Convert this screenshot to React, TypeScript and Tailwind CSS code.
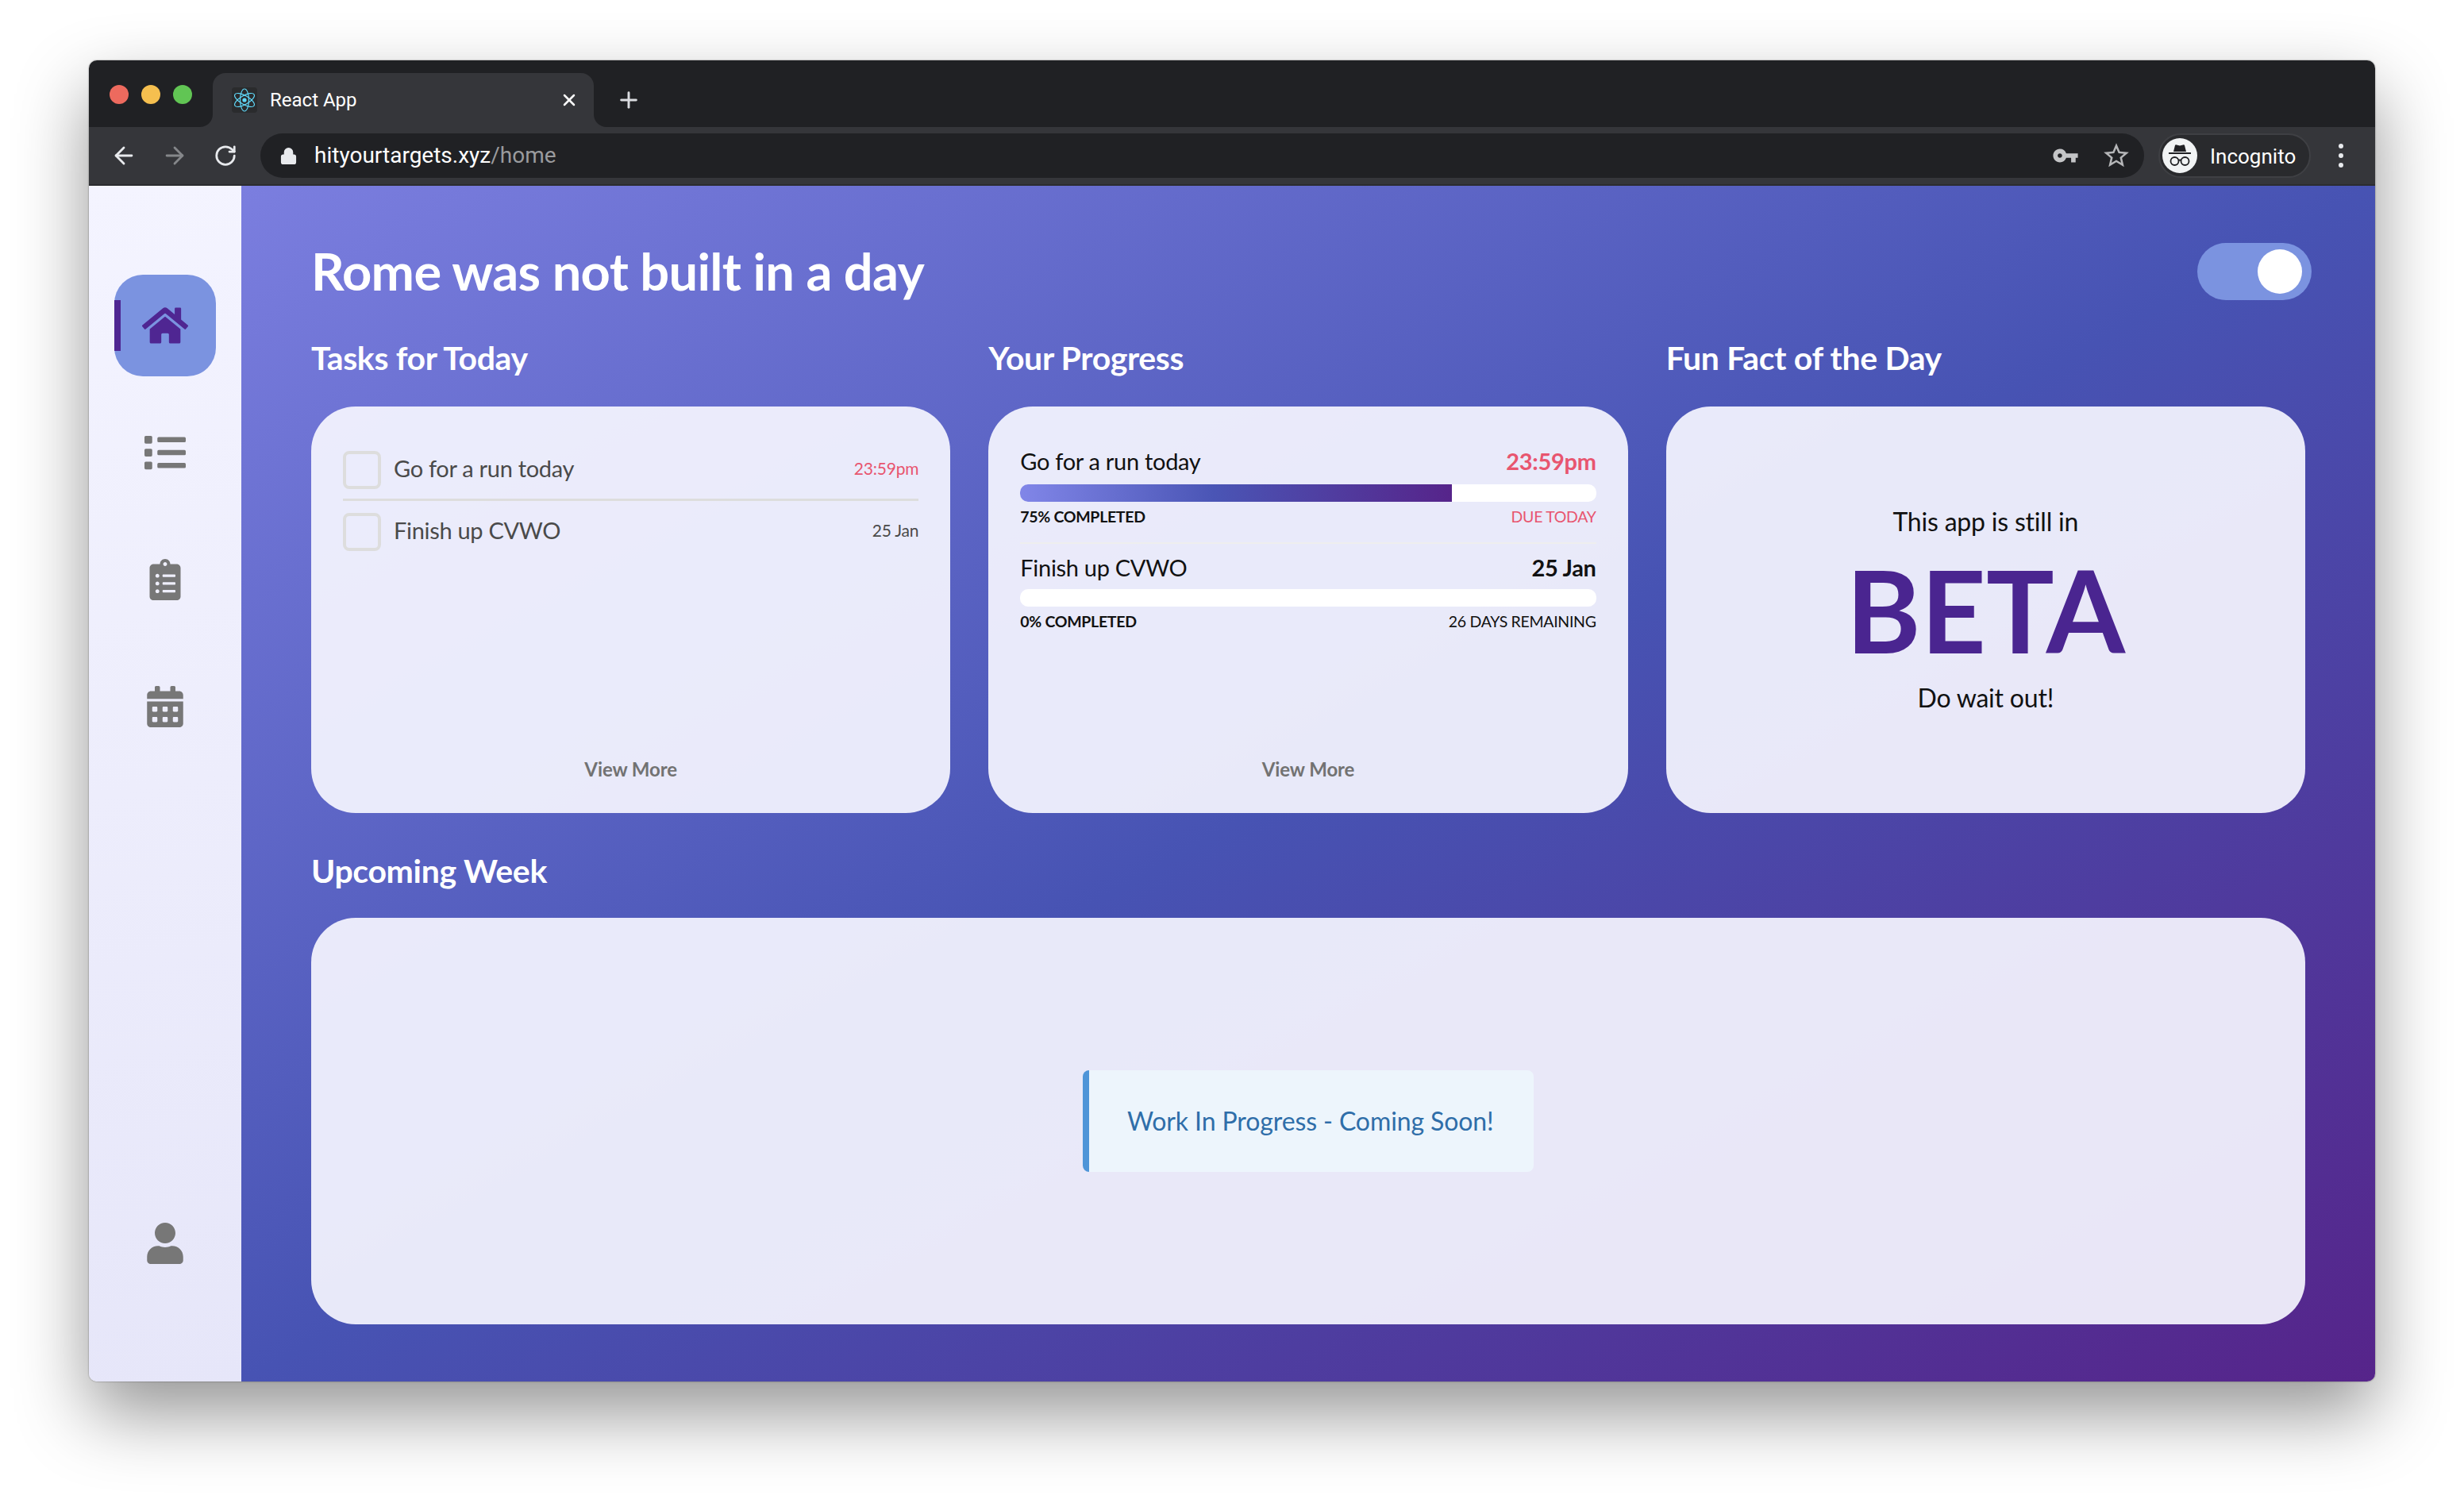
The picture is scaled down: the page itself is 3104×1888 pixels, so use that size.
import React from 'react';
import { ArrowLeft, ArrowRight, RotateCw, X, Plus, Lock } from 'lucide-react';
import { FaHome, FaList, FaClipboardList, FaCalendarAlt, FaUser } from 'react-icons/fa';
import { MdVpnKey, MdStarBorder } from 'react-icons/md';

const ReactLogo = () => (
  <svg viewBox="0 0 32 32" className="h-8 w-8 rounded bg-[#2a2b2d]">
    <g fill="none" stroke="#61dafb" strokeWidth="1.2">
      <ellipse cx="16" cy="16" rx="14" ry="5.5" transform="rotate(90 16 16)" />
      <ellipse cx="16" cy="16" rx="14" ry="5.5" transform="rotate(30 16 16)" />
      <ellipse cx="16" cy="16" rx="14" ry="5.5" transform="rotate(150 16 16)" />
    </g>
    <circle cx="16" cy="16" r="2.6" fill="#61dafb" />
  </svg>
);

const IncognitoIcon = () => (
  <svg viewBox="0 0 44 44" className="h-11 w-11 shrink-0">
    <circle cx="22" cy="22" r="22" fill="#f1f3f4" />
    <path d="M14 17 L16 9 Q16.500 8 18 8.500 L22 9.500 L26 8.500 Q27.500 8 28 9 L30 17 Z" fill="#202124" />
    <rect x="8" y="18" width="28" height="2" fill="#202124" />
    <g fill="none" stroke="#202124" strokeWidth="1.800">
      <circle cx="15.500" cy="29" r="5" />
      <circle cx="28.500" cy="29" r="5" />
      <path d="M20.500 28 Q22 27 23.500 28" />
    </g>
  </svg>
);

const TabFlare = ({ side }: { side: 'left' | 'right' }) => (
  <div className={`absolute bottom-0 h-4 w-4 bg-[#35363a] ${side === 'left' ? '-left-4' : '-right-4'}`}>
    <div className={`h-4 w-4 bg-[#202124] ${side === 'left' ? 'rounded-br-2xl' : 'rounded-bl-2xl'}`} />
  </div>
);

const BrowserChrome = () => (
  <div className="font-['Roboto',sans-serif]">
    <div className="flex h-[84px] bg-[#202124]">
      <div className="flex w-[156px] items-start gap-4 pl-[26px] pt-[31px]">
        <span className="h-6 w-6 rounded-full bg-[#ed6a5e]" />
        <span className="h-6 w-6 rounded-full bg-[#f5bf4f]" />
        <span className="h-6 w-6 rounded-full bg-[#61c554]" />
      </div>
      <div className="relative mt-4 flex h-[68px] w-[480px] items-center rounded-t-2xl bg-[#35363a] pl-6 pr-[19px]">
        <TabFlare side="left" />
        <ReactLogo />
        <span className="ml-[16px] text-[24px] text-white">React App</span>
        <X size={24} className="ml-auto text-white" strokeWidth={2.5} />
        <TabFlare side="right" />
      </div>
      <Plus size={32} className="ml-7 mt-[34px] text-[#dadce0]" strokeWidth={2.2} />
    </div>
    <div className="flex h-[74px] items-start border-b-2 border-[#2b2c2f] bg-[#35363a] pt-2">
      <div className="flex w-[216px] items-center pl-[27px] pt-[11px] text-white">
        <ArrowLeft size={34} strokeWidth={2} className="text-[#e8eaed]" />
        <ArrowRight size={34} strokeWidth={2} className="ml-[30px] text-[#85878a]" />
        <RotateCw size={30} strokeWidth={2.2} className="ml-[32px] text-[#e8eaed]" />
      </div>
      <div className="flex h-14 w-[2373px] items-center rounded-full bg-[#202124] pl-[24px] pr-[16px]">
        <Lock size={23} fill="#e8eaed" className="text-[#e8eaed]" strokeWidth={2} />
        <span className="ml-[21px] text-[28px] text-white">
          hityourtargets.xyz<span className="text-[#9a9b9e]">/home</span>
        </span>
        <MdVpnKey size={34} className="ml-auto text-[#c4c5c7]" />
        <MdStarBorder size={38} className="ml-[28px] text-[#b5b6b8]" />
      </div>
      <div className="ml-[18px] flex h-14 w-[192px] items-center rounded-full border-2 border-[#3f4044] bg-[#292a2d] pl-[3px]">
        <IncognitoIcon />
        <span className="ml-[16px] pt-[2px] text-[26px] text-white">Incognito</span>
      </div>
      <div className="ml-[35px] flex h-14 flex-col items-center justify-center gap-[6px]">
        <span className="h-[6px] w-[6px] rounded-full bg-[#e8eaed]" />
        <span className="h-[6px] w-[6px] rounded-full bg-[#e8eaed]" />
        <span className="h-[6px] w-[6px] rounded-full bg-[#e8eaed]" />
      </div>
    </div>
  </div>
);

const SideItem = ({ children, active }: { children: React.ReactNode; active?: boolean }) => (
  <div className={`relative flex h-32 w-32 items-center justify-center rounded-[36px] ${active ? 'bg-[#7b93e0] text-[#4f2692]' : 'text-[#777777]'}`}>
    {active && <span className="absolute left-0 top-8 h-16 w-2 bg-[#4f2692]" />}
    {children}
  </div>
);

const Sidebar = () => (
  <div className="flex w-[192px] shrink-0 flex-col items-center justify-between bg-[linear-gradient(170deg,#f4f4ff,#e6e6f9)] pb-[110px] pt-[112px]">
    <div className="flex flex-col gap-8">
      <SideItem active><FaHome size={58} /></SideItem>
      <SideItem><FaList size={52} /></SideItem>
      <SideItem><FaClipboardList size={52} /></SideItem>
      <SideItem><FaCalendarAlt size={52} /></SideItem>
    </div>
    <SideItem><FaUser size={52} /></SideItem>
  </div>
);

const Task = ({ name, due, urgent }: { name: string; due: string; urgent?: boolean }) => (
  <div className="flex h-12 items-center">
    <span className="h-12 w-12 shrink-0 rounded-lg border-4 border-[#dddddd]" />
    <span className="ml-4 pb-[4px] text-[29px] leading-[36px] tracking-[-0.3px] text-[#4a4a4a]">{name}</span>
    <span className={`ml-auto pb-[4px] text-[21px] leading-[36px] tracking-[-0.2px] ${urgent ? 'text-[#e8556f]' : 'text-[#4a4a4a]'}`}>{due}</span>
  </div>
);

const Progress = ({ name, due, pct, left, urgent, top }: { name: string; due: string; pct: number; left: string; urgent?: boolean; top?: boolean }) => (
  <div>
    <div className="flex items-center justify-between text-[29px] leading-[36px] tracking-[-0.3px] text-[#111111]">
      <span>{name}</span>
      <span className={`font-bold ${urgent ? 'text-[#e8556f]' : ''}`}>{due}</span>
    </div>
    <div className={`h-[22px] overflow-hidden rounded-[10px] bg-white ${top ? 'mt-[11px]' : 'mt-[9px]'}`}>
      {pct > 0 && (
        <div className="h-full w-full bg-[linear-gradient(90deg,#8186e8_0%,#4a55b5_45%,#56248a_100%)]" style={{ width: `${pct}%` }} />
      )}
    </div>
    <div className="mt-[7px] flex items-center justify-between text-[19.5px] leading-6 tracking-[-0.3px] text-[#111111]">
      <span className="font-bold">{pct}% COMPLETED</span>
      <span className={urgent ? 'text-[#e8556f]' : ''}>{left}</span>
    </div>
  </div>
);

const Card = ({ children, className = '' }: { children: React.ReactNode; className?: string }) => (
  <div className={`rounded-[56px] bg-[#f6f6ff]/[0.92] ${className}`}>{children}</div>
);

const ViewMore = () => (
  <div className="mt-auto text-center text-[24px] font-bold tracking-[-0.1px] text-[#727272]">View More</div>
);

const Heading = ({ children }: { children: React.ReactNode }) => (
  <h2 className="text-[41px] font-bold leading-[50px] tracking-[-0.35px] text-white">{children}</h2>
);

export default function App() {
  return (
    <div className="h-[1888px] w-[3104px] bg-white pl-[112px] pt-[76px]">
      <div className="flex h-[1664px] w-[2880px] flex-col overflow-hidden rounded-[10px] shadow-[0_0_2px_rgba(0,0,0,0.5),0_40px_90px_rgba(0,0,0,0.42)]">
        <BrowserChrome />
        <div className="flex flex-1 font-['Lato',sans-serif]">
          <Sidebar />
          <div className="flex-1 bg-[linear-gradient(to_bottom_right,#7b7edf_0%,#4753b3_50%,#56248a_100%)] pl-[88px] pr-[88px] pt-[72px]">
            <div className="flex h-[72px] items-center justify-between">
              <h1 className="text-[65px] font-bold tracking-[-0.67px] text-white">Rome was not built in a day</h1>
              <div className="-mr-2 flex h-[72px] w-[144px] items-center justify-end rounded-full bg-[#7b93e0] pr-3">
                <span className="h-14 w-14 rounded-full bg-white" />
              </div>
            </div>
            <div className="mt-[48px] grid grid-cols-3 gap-x-12">
              <Heading>Tasks for Today</Heading>
              <Heading>Your Progress</Heading>
              <Heading>Fun Fact of the Day</Heading>
              <Card className="mt-[36px] flex h-[512px] flex-col px-10 pb-[37px] pt-14">
                <Task name="Go for a run today" due="23:59pm" urgent />
                <div className="mb-[15px] mt-[12px] h-[3px] bg-[#dddddd]" />
                <Task name="Finish up CVWO" due="25 Jan" />
                <ViewMore />
              </Card>
              <Card className="mt-[36px] flex h-[512px] flex-col px-10 pb-[37px] pt-[51px]">
                <Progress name="Go for a run today" due="23:59pm" pct={75} left="DUE TODAY" urgent top />
                <div className="mb-[12px] mt-5 h-[2px] bg-[#eeeeee]" />
                <Progress name="Finish up CVWO" due="25 Jan" pct={0} left="26 DAYS REMAINING" />
                <ViewMore />
              </Card>
              <Card className="mt-[36px] flex h-[512px] flex-col items-center justify-center text-[#111111]">
                <p className="text-[32px] tracking-[-0.2px]">This app is still in</p>
                <p className="text-[143px] font-bold leading-[174px] text-[#4a2590]">BETA</p>
                <p className="text-[32px] tracking-[-0.2px]">Do wait out!</p>
              </Card>
            </div>
            <div className="mt-[48px]"><Heading>Upcoming Week</Heading></div>
            <Card className="mt-[34px] flex h-[512px] items-center justify-center">
              <div className="flex h-32 w-[568px] items-center rounded-lg border-l-8 border-[#4f95d8] bg-[#edf5fc] pl-12 text-[32px] tracking-[-0.1px] text-[#2f6ea9]">
                Work In Progress - Coming Soon!
              </div>
            </Card>
          </div>
        </div>
      </div>
    </div>
  );
}
